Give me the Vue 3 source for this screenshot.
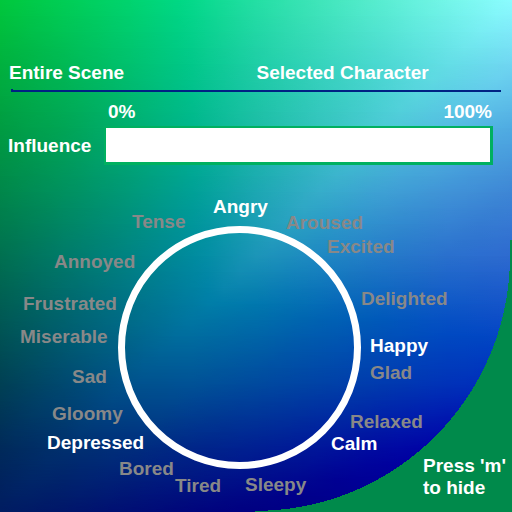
<script setup>
import { ref } from 'vue'

const target = ref('scene')
const influence = ref(100)
const selected = ref('')

// Colour mesh of the backdrop: an even grid of [r, g, b] points.
// Values below zero let a channel fade out part-way through a cell.
const mesh = [
  [[-75, 200, 60], [-48, 206, 85], [-22, 212, 110], [5, 217, 138], [36, 223, 164], [64, 230, 186], [90, 238, 210], [116, 246, 233], [140, 252, 255]],
  [[-80, 177, 62], [-52, 185, 84], [-24, 193, 110], [2, 200, 138], [30, 206, 166], [54, 212, 188], [76, 217, 210], [100, 222, 230], [112, 214, 242]],
  [[-85, 156, 66], [-56, 165, 85], [-28, 174, 112], [0, 182, 141], [28, 189, 166], [52, 196, 190], [76, 202, 214], [84, 188, 226], [80, 171, 226]],
  [[-90, 135, 74], [-60, 145, 95], [-30, 153, 120], [-2, 160, 150], [28, 167, 178], [54, 173, 202], [62, 160, 212], [64, 147, 215], [62, 134, 213]],
  [[-95, 112, 80], [-65, 122, 105], [-35, 131, 130], [-4, 139, 158], [28, 149, 184], [30, 136, 194], [36, 122, 200], [42, 112, 205], [46, 106, 208]],
  [[-100, 88, 84], [-70, 98, 110], [-40, 108, 136], [-10, 118, 162], [-8, 110, 170], [-4, 98, 178], [0, 88, 186], [6, 80, 196], [14, 76, 200]],
  [[-100, 64, 84], [-75, 73, 112], [-45, 82, 140], [-40, 82, 150], [-40, 74, 158], [-36, 66, 166], [-34, 58, 175], [-30, 50, 184], [-24, 44, 190]],
  [[-100, 42, 90], [-80, 48, 110], [-70, 46, 124], [-70, 38, 136], [-70, 31, 146], [-66, 22, 154], [-64, 10, 162], [-60, 0, 168], [-60, -8, 170]],
  [[-100, 28, 98], [-90, 22, 106], [-90, 14, 116], [-90, 5, 124], [-90, -4, 130], [-90, -14, 136], [-90, -24, 142], [-90, -30, 148], [-90, -34, 150]]
]
const steps = 32
const cells = mesh.length - 1

// Each cell is two triangles that meet along its rising diagonal.
function colourAt(u, v) {
  const col = Math.min(Math.floor(u * cells), cells - 1)
  const row = Math.min(Math.floor(v * cells), cells - 1)
  const fx = u * cells - col
  const fy = v * cells - row
  const a = mesh[row][col]
  const b = mesh[row][col + 1]
  const c = mesh[row + 1][col]
  const d = mesh[row + 1][col + 1]
  const parts = a.map((_, k) => {
    const value = fx + fy <= 1
      ? a[k] + fx * (b[k] - a[k]) + fy * (c[k] - a[k])
      : d[k] + (1 - fx) * (c[k] - d[k]) + (1 - fy) * (b[k] - d[k])
    return Math.round(Math.max(0, Math.min(255, value)))
  })
  return `rgb(${parts.join(' ')})`
}

const layers = Array.from({ length: steps + 1 }, (_, i) => {
  const stops = Array.from({ length: steps + 1 }, (_, j) => colourAt(j / steps, i / steps))
  const style = { backgroundImage: `linear-gradient(to right, ${stops.join(', ')})` }
  if (i > 0) {
    style.maskImage = `linear-gradient(to bottom, transparent ${((i - 1) * 100) / steps}%, #000 ${(i * 100) / steps}%)`
  }
  return style
})

const moods = [
  { name: 'Angry', x: 213, y: 31, main: true },
  { name: 'Aroused', x: 286, y: 47 },
  { name: 'Excited', x: 327, y: 71 },
  { name: 'Delighted', x: 361, y: 123 },
  { name: 'Happy', x: 370, y: 170, main: true },
  { name: 'Glad', x: 370, y: 197 },
  { name: 'Relaxed', x: 350, y: 246 },
  { name: 'Calm', x: 331, y: 268, main: true },
  { name: 'Sleepy', x: 245, y: 309 },
  { name: 'Tired', x: 175, y: 310 },
  { name: 'Bored', x: 119, y: 293 },
  { name: 'Depressed', x: 47, y: 267, main: true },
  { name: 'Gloomy', x: 52, y: 238 },
  { name: 'Sad', x: 72, y: 201 },
  { name: 'Miserable', x: 20, y: 161 },
  { name: 'Frustrated', x: 23, y: 128 },
  { name: 'Annoyed', x: 54, y: 86 },
  { name: 'Tense', x: 132, y: 46 }
]
</script>

<template>
  <main class="panel">
    <div class="backdrop" aria-hidden="true">
      <div v-for="(layer, i) in layers" :key="i" class="layer" :style="layer"></div>
    </div>

    <nav class="targets">
      <button type="button" @click="target = 'scene'">Entire Scene</button>
      <button type="button" @click="target = 'character'">Selected Character</button>
    </nav>
    <hr class="rule" />

    <section class="influence">
      <div class="scale"><span>0%</span><span>100%</span></div>
      <label for="influence">Influence</label>
      <input id="influence" v-model="influence" class="bar" type="range" min="0" max="100" />
    </section>

    <section class="wheel">
      <div class="ring"></div>
      <button
        v-for="mood in moods"
        :key="mood.name"
        type="button"
        class="mood"
        :class="{ main: mood.main }"
        :style="{ left: mood.x + 'px', top: mood.y + 'px' }"
        @click="selected = mood.name"
      >{{ mood.name }}</button>
    </section>

    <div class="corner">
      <svg class="corner-shape" viewBox="255 240 257 272" aria-hidden="true" shape-rendering="crispEdges">
        <path d="M512 240H510V256A255 255 0 0 1 255 511V512H512Z" fill="#008a4b" />
      </svg>
      <p class="hint">Press 'm'<br />to hide</p>
    </div>
  </main>
</template>

<style>
body {
  margin: 0;
}
</style>

<style scoped>
.panel {
  position: relative;
  display: flex;
  flex-direction: column;
  min-height: 100vh;
  box-sizing: border-box;
  padding-top: 62px;
  overflow: hidden;
  isolation: isolate;
  color: #fff;
  font: bold 19px/22px "Liberation Sans", Arial, sans-serif;
}
.backdrop,
.layer {
  position: absolute;
  inset: 0;
}
.backdrop {
  z-index: -1;
}
button {
  padding: 0;
  border: 0;
  background: none;
  color: inherit;
  font: inherit;
  text-align: left;
  white-space: nowrap;
  cursor: pointer;
}
.targets {
  display: grid;
  grid-template-columns: 1fr 1fr;
  padding: 0 8px 0 9px;
}
.rule {
  position: relative;
  width: auto;
  height: 2px;
  margin: 6px 11px 0;
  border: 0;
  overflow: visible;
  background: #002283;
}
.rule::before {
  content: "";
  position: absolute;
  left: 0;
  bottom: 100%;
  width: 2px;
  height: 1px;
  background: #002283;
}
.influence {
  display: grid;
  grid-template-columns: 96px 1fr;
  row-gap: 3px;
  align-items: center;
  padding: 9px 19px 0 8px;
}
.scale {
  grid-column: 2;
  display: flex;
  justify-content: space-between;
  padding: 0 1px 0 4px;
}
.bar {
  appearance: none;
  width: 100%;
  height: 39px;
  box-sizing: border-box;
  margin: 0;
  border: solid #00b060;
  border-width: 2px 3px 3px 2px;
  background: #fff;
  cursor: pointer;
}
.bar::-webkit-slider-thumb {
  appearance: none;
  width: 4px;
  height: 34px;
  background: transparent;
}
.wheel {
  position: relative;
  flex: 1 0 auto;
  min-height: 347px;
}
.ring {
  position: absolute;
  left: 118px;
  top: 61px;
  width: 243px;
  height: 243px;
  box-sizing: border-box;
  border: 7px solid #fff;
  border-radius: 50%;
}
.mood {
  position: absolute;
  color: #888;
}
.mood.main {
  color: #fff;
}
.corner {
  position: absolute;
  right: 0;
  bottom: 0;
  width: 257px;
  display: grid;
  justify-items: end;
  align-items: end;
  pointer-events: none;
}
.corner-shape {
  grid-area: 1 / 1;
  display: block;
  width: 100%;
}
.hint {
  grid-area: 1 / 1;
  margin: 0;
  padding: 0 6px 13px 0;
}
</style>
